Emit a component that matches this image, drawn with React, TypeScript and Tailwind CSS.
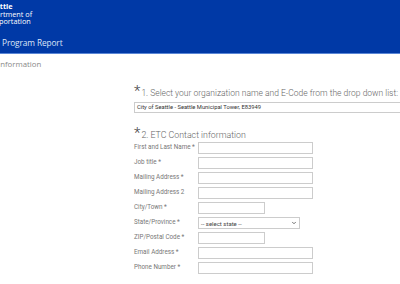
import { ChevronDown } from 'lucide-react';

const FIELDS = [
  { label: 'First and Last Name *', w: 'w-[115px]' },
  { label: 'Job title  *', w: 'w-[115px]' },
  { label: 'Mailing Address *', w: 'w-[115px]' },
  { label: 'Mailing Address 2', w: 'w-[115px]' },
  { label: 'City/Town *', w: 'w-[67px]' },
  { label: 'State/Province *', w: 'w-[102px]', select: true },
  { label: 'ZIP/Postal Code *', w: 'w-[67px]' },
  { label: 'Email Address *', w: 'w-[115px]' },
  { label: 'Phone Number *', w: 'w-[115px]' },
];

export default function App() {
  return (
    <div className="w-[400px] h-[284px] overflow-hidden bg-white font-['Open_Sans',sans-serif]">
      <header className="h-[54px] bg-[#0039a6] border-b border-[#5a86d6] text-white">
        <div className="pt-[3px] text-[7.3px] leading-[7.5px]">
          <div className="font-bold -ml-[13px]">Seattle</div>
          <div className="-ml-[18px]">Department of</div>
          <div className="-ml-[20px]">Transportation</div>
        </div>
        <div className="mt-[12px] pl-[2px] text-[8.3px] leading-[10px] tracking-[-0.1px] text-[#dde6f7]">Program Report</div>
      </header>

      <div className="pt-[4px] -ml-[2px] text-[7.8px] leading-[12px] text-[#888]">Information</div>

      <div className="pl-[134px] pt-[15px] font-['Roboto',sans-serif] font-light text-[#666]">
        <h2 className="flex items-start text-[8.5px] leading-[10px] whitespace-nowrap">
          <span className="text-[15px] leading-[13px] text-[#444] mr-[1px]">*</span>
          <span className="pt-[3px]">1. Select your organization name and E-Code from the drop down list:</span>
        </h2>
        <div className="mt-[4px] h-[11px] w-[300px] border border-[#ccc] px-[2px] text-[5.8px] leading-[9px] text-[#333] font-normal">
          City of Seattle - Seattle Municipal Tower, E83949
        </div>

        <h2 className="mt-[14px] flex items-start text-[8.8px] leading-[10px] whitespace-nowrap">
          <span className="text-[15px] leading-[13px] text-[#444] mr-[1px]">*</span>
          <span className="pt-[3px]">2. ETC Contact information</span>
        </h2>

        <div className="mt-[2px] flex flex-col gap-[3px]">
          {FIELDS.map((f) => (
            <div key={f.label} className="flex items-center h-[12px]">
              <span className="w-[64px] text-[6.3px] text-[#777] font-normal">{f.label}</span>
              {f.select ? (
                <div className={`${f.w} h-[12px] border border-[#ccc] flex items-center justify-between px-[2px] text-[6px] text-[#444] font-normal`}>
                  <span>-- select state --</span>
                  <ChevronDown className="w-[6px] h-[6px]" strokeWidth={3} />
                </div>
              ) : (
                <div className={`${f.w} h-[12px] border border-[#ccc]`} />
              )}
            </div>
          ))}
        </div>
      </div>
    </div>
  );
}
